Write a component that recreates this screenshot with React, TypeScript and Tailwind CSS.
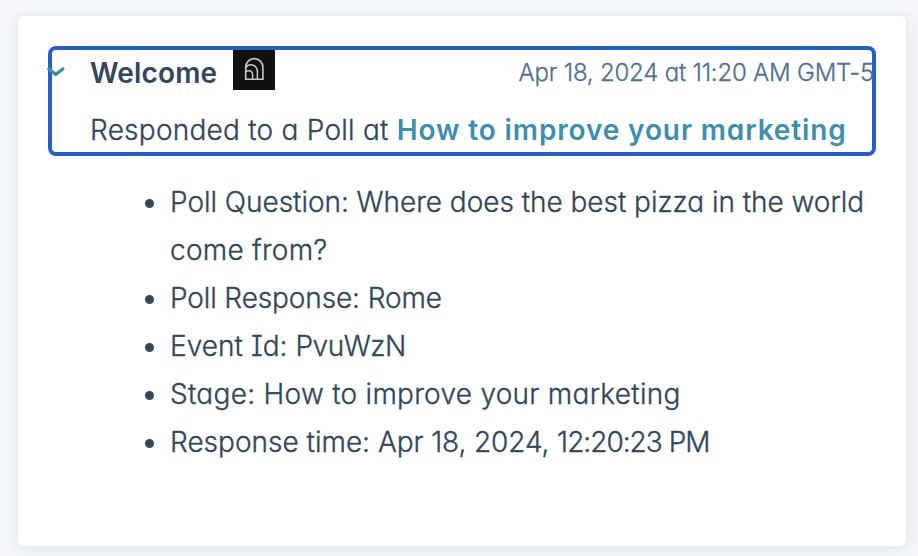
import React from "react";

type Run = { text: string; tracking: string };

const details: Run[][][] = [
  [
    [{ text: "Poll Question: Where does the best pizza in the world", tracking: "tracking-[-0.035px]" }],
    [{ text: "come from?", tracking: "tracking-[0.25px]" }],
  ],
  [[{ text: "Poll Response: Rome", tracking: "tracking-[-0.12px]" }]],
  [[
    { text: "Event Id: ", tracking: "tracking-[0.05px]" },
    { text: "PvuWzN", tracking: "tracking-[-0.5px]" },
  ]],
  [[{ text: "Stage: How to improve your marketing", tracking: "tracking-[0.28px]" }]],
  [[
    { text: "Response time: ", tracking: "tracking-normal" },
    { text: "Apr 18, 2024, ", tracking: "tracking-[-0.1px]" },
    { text: "12:20:23 PM", tracking: "tracking-[-1px]" },
  ]],
];

function ArchLogo() {
  return (
    <span className="flex h-10 w-[42px] shrink-0 items-start bg-[#111111] pl-[11px] pt-[7px]">
      <svg width="20" height="24" viewBox="0 0 20 24" fill="none" stroke="#c9c9c9" strokeWidth="1.6">
        <path d="M1.7 22.2V10.2a8.6 8.6 0 0 1 17.2 0v12z" />
        <path d="M1.7 10.6C3 8.4 5.2 7.8 7 7.8c3.8 0 6.4 3 6.4 6.8v7.4" strokeWidth="1.5" />
        <path d="M1.7 14.8c.8-.8 1.9-1.1 3.1-1.1 2.4 0 3.8 1.8 3.8 4v4.5" strokeWidth="1.5" />
      </svg>
    </span>
  );
}

export default function App() {
  return (
    <main className="h-[556px] w-[918px] overflow-hidden bg-[#f5f7fa] pl-[18px] pt-4 font-['Inter','Lato',sans-serif] text-[28px] font-light text-[#33475b] [font-feature-settings:'cv11','cv08']">
      <article className="h-[530px] w-[888px] rounded-md bg-white pl-[30px] pt-[30px] shadow-[0_2px_16px_rgba(45,62,80,0.12)]">
        <header className="relative h-[110px] w-[828px] rounded-lg border-4 border-[#275ec8] pl-[38px]">
          <svg className="absolute -left-[6px] top-[15px]" width="20" height="14" viewBox="0 0 20 14" fill="none" stroke="#3e8fab" strokeWidth="3.4" strokeLinecap="round" strokeLinejoin="round">
            <path d="M2.8 4l7 5.4L16.8 4" />
          </svg>
          <div className="flex h-10 items-start whitespace-nowrap">
            <h1 className="w-[143px] pt-[3px] text-[28px] font-semibold leading-10 tracking-[0.15px]">Welcome</h1>
            <ArchLogo />
            <time className="ml-auto mr-[-2px] pt-[3px] text-2xl leading-10 tracking-[-0.21px] text-[#516f90] [-webkit-text-stroke:0.3px]">Apr 18, 2024 at 11:20 AM GMT-5</time>
          </div>
          <p className="flex whitespace-pre pt-5 leading-10">
            <span className="tracking-[0.24px] [-webkit-text-stroke:0.35px]">Responded to a Poll at </span>
            <a className="font-semibold tracking-[0.87px] text-[#3e8fab]">How to improve your marketing</a>
          </p>
        </header>
        <ul className="pl-[97px] pt-[22px] leading-[48px] [-webkit-text-stroke:0.35px]">
          {details.map((lines) => (
            <li key={lines[0][0].text} className="flex whitespace-pre">
              <span className="mt-[21px] mr-4 size-[9px] shrink-0 rounded-full bg-[#33475b]" />
              <div>
                {lines.map((runs) => (
                  <p key={runs[0].text}>
                    {runs.map((run) => (
                      <span key={run.text} className={run.tracking}>{run.text}</span>
                    ))}
                  </p>
                ))}
              </div>
            </li>
          ))}
        </ul>
      </article>
    </main>
  );
}
